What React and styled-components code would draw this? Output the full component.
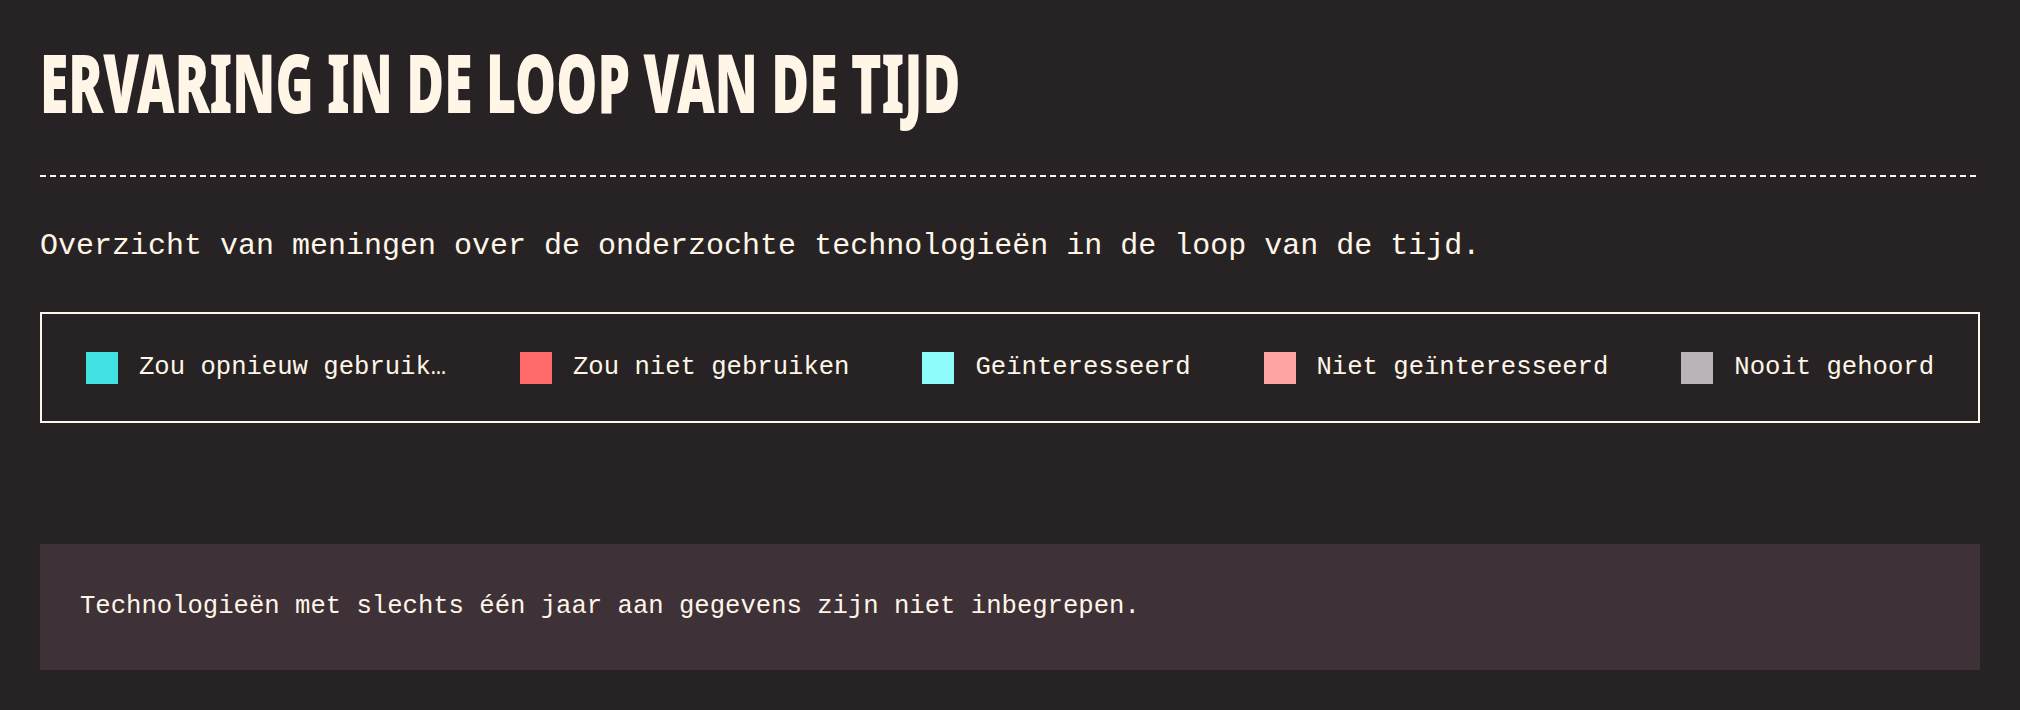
import React from "react";
import styled, { createGlobalStyle } from "styled-components";

const cream = "#fff6e8";

const GlobalStyle = createGlobalStyle`
  html, body {
    margin: 0;
    padding: 0;
    background: #272324;
  }
  * {
    box-sizing: border-box;
  }
`;

const legendItems = [
  { label: "Zou opnieuw gebruiken", color: "#41e1e1" },
  { label: "Zou niet gebruiken", color: "#ff6b6b" },
  { label: "Geïnteresseerd", color: "#8ffcfc" },
  { label: "Niet geïnteresseerd", color: "#ffa3a3" },
  { label: "Nooit gehoord", color: "#bab3b8" },
];

export default function App() {
  return (
    <>
      <GlobalStyle />
      <Page>
        <Title>Ervaring in de loop van de tijd</Title>
        <Divider />
        <Intro>
          Overzicht van meningen over de onderzochte technologieën in de loop van de tijd.
        </Intro>
        <Legend>
          {legendItems.map((item) => (
            <LegendItem key={item.label}>
              <Swatch $color={item.color} />
              <LegendLabel>{item.label}</LegendLabel>
            </LegendItem>
          ))}
        </Legend>
        <Note>
          Technologieën met slechts één jaar aan gegevens zijn niet inbegrepen.
        </Note>
      </Page>
    </>
  );
}

const Page = styled.div`
  padding: 0 40px;
  color: ${cream};
  font-family: "Liberation Mono", "DejaVu Sans Mono", monospace;
`;

/* no condensed display face installed, so squeeze a black sans instead */
const Title = styled.h2`
  margin: 40px 0 0;
  font-family: "Noto Sans", "Liberation Sans", sans-serif;
  font-weight: 900;
  font-size: 82px;
  line-height: 1;
  text-transform: uppercase;
  white-space: nowrap;
  color: ${cream};
  transform: scaleX(0.63);
  transform-origin: left center;
`;

const Divider = styled.div`
  margin-top: 53px;
  height: 2px;
  background: repeating-linear-gradient(90deg, ${cream} 0 6px, transparent 6px 10px);
`;

const Intro = styled.p`
  margin: 47px 0 0;
  font-size: 30px;
  line-height: 45px;
`;

const Legend = styled.div`
  margin-top: 43px;
  height: 111px;
  border: 2px solid ${cream};
  padding: 0 44px;
  display: flex;
  align-items: center;
  justify-content: space-between;
`;

const LegendItem = styled.div`
  display: flex;
  align-items: center;
  gap: 21px;
  min-width: 0;
`;

const Swatch = styled.span`
  flex: none;
  width: 32px;
  height: 32px;
  background: ${({ $color }) => $color};
`;

const LegendLabel = styled.span`
  font-size: 25.6px;
  line-height: 32px;
  max-width: 308px;
  white-space: nowrap;
  overflow: hidden;
  text-overflow: ellipsis;
`;

const Note = styled.div`
  margin-top: 121px;
  height: 126px;
  padding: 0 40px;
  display: flex;
  align-items: center;
  background: #3e3138;
  font-size: 25.6px;
  line-height: 32px;
`;
